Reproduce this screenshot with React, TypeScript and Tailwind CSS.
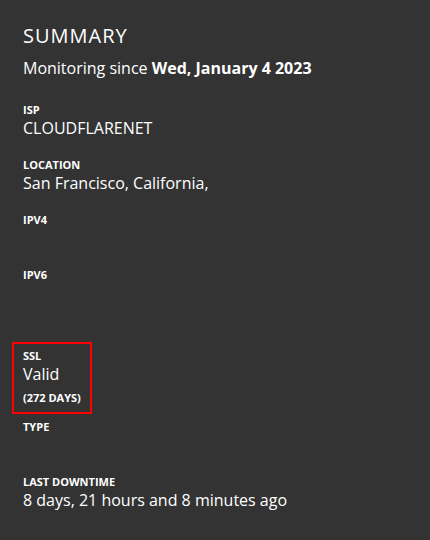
import React from "react";

function Item({ label, value }: { label: string; value?: string }) {
  return (
    <div className="mb-[18px]">
      <div className="text-[11px] font-bold leading-[15px] uppercase">{label}</div>
      <div className="text-[16px] leading-[22px] min-h-[22px]">{value}</div>
    </div>
  );
}

export default function App() {
  return (
    <div
      className="w-[430px] h-[540px] bg-[#333333] text-white px-[23px] pt-[22px]"
      style={{ fontFamily: '"Open Sans", sans-serif' }}
    >
      <h2 className="text-[20px] leading-[28px] tracking-[1px]">SUMMARY</h2>
      <p className="text-[16px] leading-[24px] mt-[6px] mb-[22px]">
        Monitoring since <strong className="font-bold">Wed, January 4 2023</strong>
      </p>
      <Item label="ISP" value="CLOUDFLARENET" />
      <Item label="Location" value="San Francisco, California," />
      <Item label="IPv4" />
      <Item label="IPv6" />
      <div className="-mx-[11px] mt-[38px] mb-[5px] w-[80px] border-2 border-[#ff0000] px-[9px] pt-[4px] pb-[7px]">
        <div className="text-[11px] font-bold leading-[15px] uppercase">SSL</div>
        <div className="text-[16px] leading-[22px]">Valid</div>
        <div className="text-[11px] font-bold leading-[15px] uppercase mt-[5px]">(272 days)</div>
      </div>
      <Item label="Type" />
      <Item label="Last downtime" value="8 days, 21 hours and 8 minutes ago" />
    </div>
  );
}
